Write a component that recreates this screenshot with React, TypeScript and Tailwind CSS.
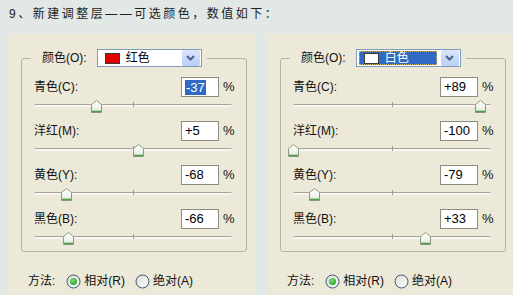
import type { CSSProperties } from 'react';

type Channel = {
  label: string;
  value: number;
  selected?: boolean;
};

type PanelProps = {
  colorName: string;
  swatchClass: string;
  active: boolean;
  channels: Channel[];
};

const leftChannels: Channel[] = [
  { label: '青色(C):', value: -37, selected: true },
  { label: '洋红(M):', value: 5 },
  { label: '黄色(Y):', value: -68 },
  { label: '黑色(B):', value: -66 },
];

const rightChannels: Channel[] = [
  { label: '青色(C):', value: 89 },
  { label: '洋红(M):', value: -100 },
  { label: '黄色(Y):', value: -79 },
  { label: '黑色(B):', value: 33 },
];

const formatValue = (value: number) => (value > 0 ? `+${value}` : `${value}`);

const Thumb = ({ style }: { style: CSSProperties }) => (
  <svg className="absolute top-[3px]" width="11" height="13" viewBox="0 0 11 13" style={style}>
    <defs>
      <linearGradient id="thumbFill" x1="0" y1="0" x2="0" y2="1">
        <stop offset="0" stopColor="#ffffff" />
        <stop offset="0.6" stopColor="#f1f5ec" />
        <stop offset="1" stopColor="#cfe3c6" />
      </linearGradient>
    </defs>
    <path d="M0.5 4.5 L5.5 0.5 L10.5 4.5 V12.5 H0.5 Z" fill="url(#thumbFill)" stroke="#8a9a86" />
    <path d="M1 11.5 H10" stroke="#4f9a4a" strokeWidth="1.5" />
  </svg>
);

const Slider = ({ value }: { value: number }) => {
  const pct = ((value + 100) / 200) * 100;
  return (
    <div className="relative h-[18px] w-[198px]">
      <div className="absolute left-0 right-0 top-[7px] h-[3px] rounded-full border-t border-[#a7a597] bg-[#f7f6f0]" />
      <div className="absolute left-1/2 top-[5px] h-[5px] w-px bg-[#9c9a8c]" />
      <Thumb style={{ left: `calc(${pct}% - 5px)` }} />
    </div>
  );
};

const ChannelRow = ({ channel, first }: { channel: Channel; first: boolean }) => (
  <div className={first ? '' : 'mt-[6px]'}>
    <div className="flex h-[20px] items-center">
      <span className="flex-1 text-[12px] text-[#111]">{channel.label}</span>
      <div className="flex h-[20px] w-[38px] items-center border border-[#8c8c80] bg-white pl-[3px] text-[13px] text-black">
        {channel.selected ? (
          <span className="bg-[#316ac5] px-px leading-[15px] text-white">{formatValue(channel.value)}</span>
        ) : (
          <span>{formatValue(channel.value)}</span>
        )}
      </div>
      <span className="ml-[4px] w-[12px] text-[13px] text-[#111]">%</span>
    </div>
    <Slider value={channel.value} />
  </div>
);

const ColorSelect = ({ colorName, swatchClass, active }: Omit<PanelProps, 'channels'>) => (
  <div className="ml-[10px] flex h-[18px] w-[105px] items-center border border-[#7f9db9] bg-white">
    <div
      className={
        active
          ? 'ml-[2px] flex h-[14px] w-[78px] items-center border border-dotted border-[#c9b26a] bg-[#316ac5] pl-[4px] text-white'
          : 'ml-[2px] flex h-[14px] w-[78px] items-center pl-[5px] text-black'
      }
    >
      <span className={`h-[11px] w-[15px] border border-[#3a3a3a] ${swatchClass}`} />
      <span className="ml-[6px] text-[12px] leading-none">{colorName}</span>
    </div>
    <div className="ml-auto mr-px flex h-[16px] w-[18px] items-center justify-center rounded-[2px] bg-gradient-to-b from-[#dbe6fd] to-[#b8cdf8]">
      <svg width="9" height="6" viewBox="0 0 9 6">
        <path d="M1 1 L4.5 4.5 L8 1" fill="none" stroke="#4d6185" strokeWidth="2" />
      </svg>
    </div>
  </div>
);

const Radio = ({ checked }: { checked: boolean }) => (
  <svg width="15" height="15" viewBox="0 0 15 15">
    <defs>
      <linearGradient id="radioFill" x1="0" y1="0" x2="1" y2="1">
        <stop offset="0" stopColor="#dcdad2" />
        <stop offset="1" stopColor="#ffffff" />
      </linearGradient>
      <radialGradient id="radioDot" cx="0.4" cy="0.35" r="0.7">
        <stop offset="0" stopColor="#7fe07a" />
        <stop offset="1" stopColor="#21a121" />
      </radialGradient>
    </defs>
    <circle cx="7.5" cy="7.5" r="6.5" fill="url(#radioFill)" stroke="#3d5b7a" />
    {checked && <circle cx="7.5" cy="7.5" r="3.5" fill="url(#radioDot)" />}
  </svg>
);

const Panel = ({ colorName, swatchClass, active, channels }: PanelProps) => (
  <section className="h-[261px] w-[248px] shrink-0 bg-[#ece9d8] pt-[24px]">
    <div className="relative ml-[13px] mr-[9px] h-[194px] rounded-[3px] border border-[#b5b3a4] pl-[12px] pr-[11px] pt-[18px]">
      <div className="absolute left-[9px] top-[-10px] flex items-center bg-[#ece9d8] pl-[11px] pr-[5px]">
        <span className="text-[12px] text-[#111]">颜色(O):</span>
        <ColorSelect colorName={colorName} swatchClass={swatchClass} active={active} />
      </div>
      {channels.map((channel, index) => (
        <ChannelRow key={channel.label} channel={channel} first={index === 0} />
      ))}
    </div>
    <div className="mt-[21px] flex h-[16px] items-center pl-[20px] text-[12px] text-[#111]">
      <span>方法:</span>
      <span className="ml-[11px] flex items-center">
        <Radio checked />
        <span className="ml-[3px]">相对(R)</span>
      </span>
      <span className="ml-[10px] flex items-center">
        <Radio checked={false} />
        <span className="ml-[3px]">绝对(A)</span>
      </span>
    </div>
  </section>
);

export default function App() {
  return (
    <div className="h-[295px] w-[513px] overflow-hidden bg-[#e1e8e5] font-['Liberation_Sans','Noto_Sans_CJK_SC',sans-serif]">
      <h1 className="h-[34px] pl-[9px] pt-[6px] text-[12px] leading-[16px] tracking-[2.5px] text-[#222]">
        9、新建调整层——可选颜色，数值如下：
      </h1>
      <div className="flex gap-[11px] pl-[8px]">
        <Panel colorName="红色" swatchClass="bg-[#e00000]" active={false} channels={leftChannels} />
        <Panel colorName="白色" swatchClass="bg-white" active channels={rightChannels} />
      </div>
    </div>
  );
}
